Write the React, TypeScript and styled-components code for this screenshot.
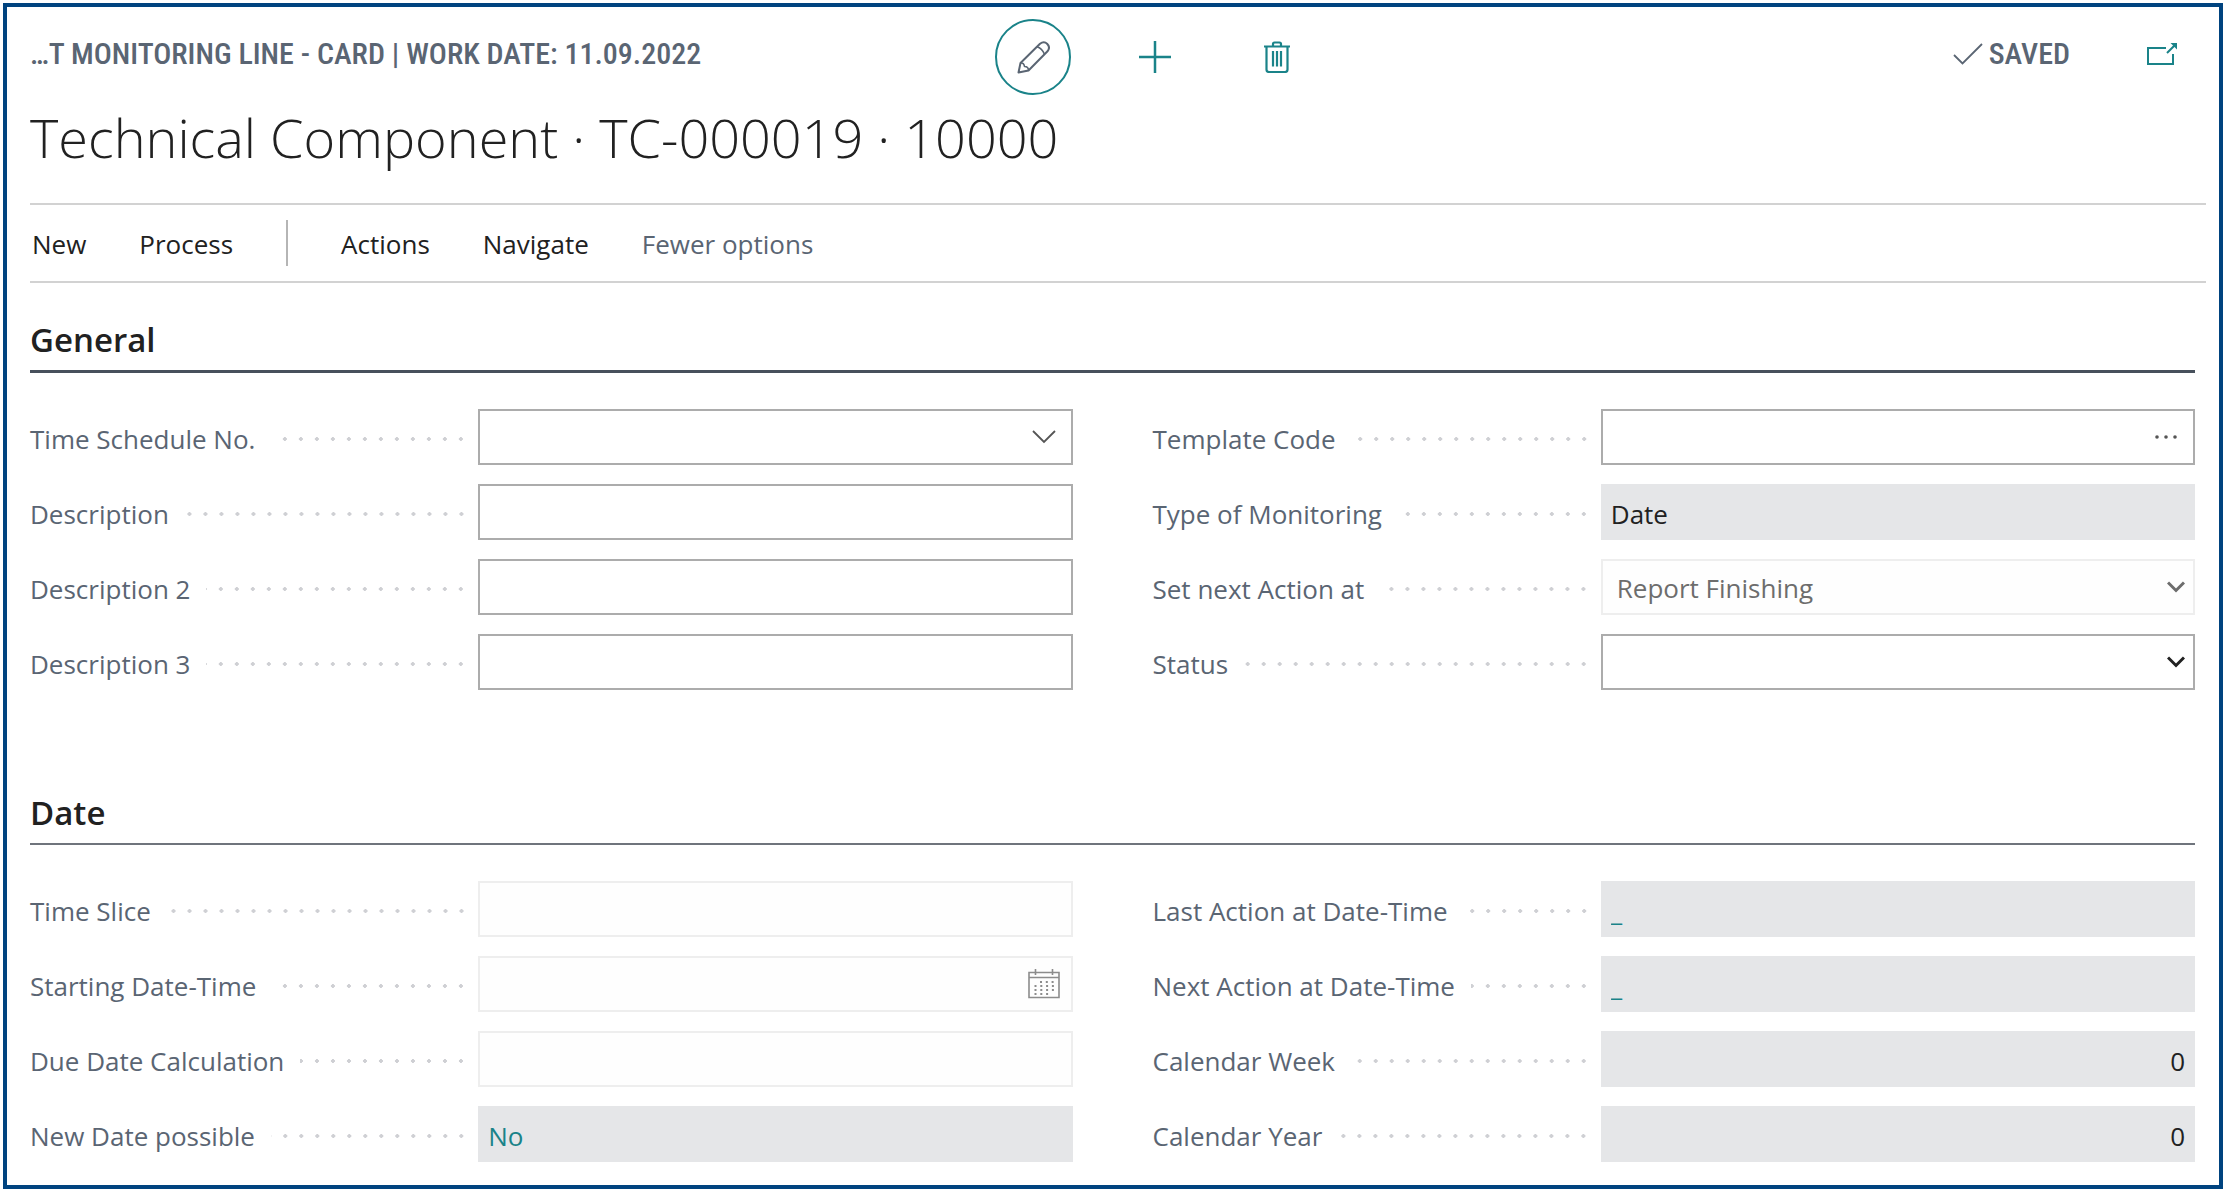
import React from 'react';
import styled, { createGlobalStyle, css } from 'styled-components';

const color = {
  frame: '#00437f',
  teal: '#1a8389',
  ink: '#212121',
  muted: '#5a6573',
  line: '#d2d2d2',
  border: '#acacac',
  borderDisabled: '#eeeeee',
  fill: '#e5e6e8',
  dot: '#cfd0d4',
};

const GlobalStyle = createGlobalStyle`
  *, *::before, *::after { box-sizing: border-box; }
  body { margin: 0; background: #fff; }
  button, input, select { font: inherit; color: inherit; }
`;

const Frame = styled.main`
  margin: 3px;
  padding: 12px 13px 23px 23px;
  border: 4px solid ${color.frame};
  background: #fff;
  color: ${color.ink};
  font: 400 26px/36px "Open Sans", "Noto Sans", sans-serif;
`;

const Header = styled.header`
  display: grid;
  grid-template-columns: 13fr auto 12fr;
  align-items: center;
  height: 76px;
`;

const Caption = styled.span`
  color: ${color.muted};
  font: 500 30px/40px "Roboto Condensed", Roboto, sans-serif;
  white-space: nowrap;
`;

const Heading = styled.div`
  display: flex;
  align-items: center;
  padding-bottom: 6px;
`;

const Tools = styled.div`
  display: flex;
  align-items: center;
  gap: 46px;
`;

const IconButton = styled.button<{ $ring?: boolean }>`
  display: grid;
  place-items: center;
  width: 76px;
  height: 76px;
  padding: 0;
  border: ${p => (p.$ring ? `2px solid ${color.teal}` : '0')};
  border-radius: 50%;
  background: none;
  color: ${p => (p.$ring ? color.muted : color.teal)};
`;

const Status = styled(Heading)`
  justify-content: flex-end;
  gap: 6px;
  color: ${color.muted};
`;

const PopOut = styled.button`
  display: grid;
  place-items: center;
  width: 56px;
  height: 56px;
  margin: 0 16px 0 58px;
  padding: 0;
  border: 0;
  background: none;
  color: ${color.teal};
`;

const Title = styled.h1`
  margin: 5px 0 29px;
  font-size: 54px;
  line-height: 74px;
  font-weight: 300;
`;

const Menu = styled.nav`
  display: flex;
  align-items: center;
  gap: 53px;
  height: 80px;
  padding-left: 2px;
  border-top: 2px solid ${color.line};
  border-bottom: 2px solid ${color.line};
`;

const MenuItem = styled.button<{ $soft?: boolean }>`
  padding: 2px 0 0;
  border: 0;
  background: none;
  color: ${p => (p.$soft ? color.muted : color.ink)};
`;

const Divider = styled.span`
  width: 2px;
  height: 46px;
  background: #b5b5b5;
`;

const Body = styled.div`
  padding-top: 34px;
`;

const Section = styled.section`
  margin-right: 11px;
  & + & { margin-top: 100px; }
`;

const SectionTitle = styled.h2<{ $active?: boolean }>`
  margin: 0 0 36px;
  padding-bottom: 7px;
  border-bottom: ${p => (p.$active ? '3px solid #47505c' : '2px solid #6f747c')};
  font-size: 33px;
  line-height: 46px;
  font-weight: 600;
`;

const Columns = styled.div`
  display: grid;
  grid-template-columns: 1fr 1fr;
  column-gap: 80px;
`;

const Column = styled.div`
  display: grid;
  align-content: start;
  row-gap: 19px;
`;

const Row = styled.div`
  display: grid;
  grid-template-columns: 43% 1fr;
  height: 56px;
`;

const Label = styled.label`
  display: flex;
  align-items: center;
  gap: 16px;
  padding: 4px 9px 0 0;
  color: ${color.muted};
  white-space: nowrap;
  &::after {
    content: '';
    flex: 1;
    height: 4px;
    background: radial-gradient(circle, ${color.dot} 0 1px, ${color.dot} 2px, transparent 2px) right center / 16px 4px repeat-x;
  }
`;

type Kind = 'edit' | 'disabled' | 'readonly';

const look = {
  edit: css`border: 2px solid ${color.border}; background: #fff;`,
  disabled: css`border: 2px solid ${color.borderDisabled}; background: #fefefe;`,
  readonly: css`border: 0; background: ${color.fill};`,
};

const Box = styled.div<{ $kind: Kind }>`
  display: flex;
  align-items: center;
  min-width: 0;
  ${p => look[p.$kind]}
`;

const TextInput = styled.input<{ $teal?: boolean; $end?: boolean }>`
  flex: 1;
  min-width: 0;
  align-self: stretch;
  padding: 4px 10px 0;
  border: 0;
  outline: 0;
  background: none;
  color: ${p => (p.$teal ? color.teal : color.ink)};
  text-align: ${p => (p.$end ? 'right' : 'left')};
`;

const Assist = styled.button`
  display: grid;
  place-items: center;
  width: 54px;
  align-self: stretch;
  padding: 0;
  border: 0;
  background: none;
  color: #555;
`;

const SelectBox = styled(Box)`
  display: grid;
  grid-template-columns: 1fr 34px;
  color: ${p => (p.$kind === 'disabled' ? '#6d6d6d' : color.ink)};
  > * { grid-row: 1; }
  > svg { grid-column: 2; justify-self: center; pointer-events: none; }
`;

const Select = styled.select`
  grid-column: 1 / -1;
  align-self: stretch;
  appearance: none;
  padding: 2px 14px 0;
  border: 0;
  outline: 0;
  background: none;
  opacity: 1;
`;

const Pencil = () => (
  <svg width="33" height="33" viewBox="0 0 33 33" fill="none" stroke="currentColor" strokeWidth="2" strokeLinejoin="round">
    <path d="M1.500 31.500 3.500 22 23 2.800q4-3.200 7.300.200t.200 7.300L11.500 29.500Z" />
    <path d="M3.500 22q3.500-.500 4 3.500 4 0 4 4M20 5.800q5 1.500 7.500 7.500" strokeWidth="1.600" />
  </svg>
);

const Plus = () => (
  <svg width="32" height="32" viewBox="0 0 32 32" fill="none" stroke="currentColor" strokeWidth="2.500">
    <path d="M16 0v32M0 16h32" />
  </svg>
);

const Trash = () => (
  <svg width="26" height="32" viewBox="0 0 26 32" fill="none" stroke="currentColor" strokeWidth="2.200">
    <path d="M0 5.500h26M9 5V3q0-1.500 1.500-1.500h5Q17 1.500 17 3v2" />
    <path d="M2.500 6v22.500q0 2.500 2.500 2.500h16q2.500 0 2.500-2.500V6" />
    <path d="M9 10v15.500M13 10v15.500M17 10v15.500" strokeWidth="2.200" />
  </svg>
);

const Check = () => (
  <svg width="30" height="24" viewBox="0 0 30 24" fill="none" stroke="currentColor" strokeWidth="1.800">
    <path d="m1 13 8.500 8.500L29 2" />
  </svg>
);

const PopOutIcon = () => (
  <svg width="32" height="24" viewBox="0 0 32 24" fill="none" stroke="currentColor" strokeWidth="2">
    <path d="M20 6H2v16h25V12M21 11l8-8" />
    <path d="M24.500 1H31v6.500Z" fill="currentColor" stroke="none" />
  </svg>
);

const ThinChevron = () => (
  <svg width="24" height="14" viewBox="0 0 24 14" fill="none" stroke="currentColor" strokeWidth="1.800">
    <path d="m1 1 11 11L23 1" />
  </svg>
);

const BoldChevron = () => (
  <svg width="18" height="12" viewBox="0 0 18 12" fill="none" stroke="currentColor" strokeWidth="3">
    <path d="m1 1.500 8 8 8-8" />
  </svg>
);

const Ellipsis = () => (
  <svg width="24" height="4" viewBox="0 0 24 4" fill="currentColor">
    <circle cx="3" cy="2" r="1.800" />
    <circle cx="12" cy="2" r="1.800" />
    <circle cx="21" cy="2" r="1.800" />
  </svg>
);

const Calendar = () => (
  <svg width="32" height="30" viewBox="0 0 32 30" fill="none" stroke="#8c8c8c" strokeWidth="1.600">
    <path d="M1 3.500h30v25H1ZM1 8.500h30M7.500 0v6M24.500 0v6" />
    <path d="M12 13h14M6.500 17h19.500M6.500 21h19.500M6.500 25h14" strokeWidth="2" strokeDasharray="2 3.800" />
  </svg>
);

type FieldDef = {
  label: string;
  kind: Kind;
  value?: string;
  teal?: boolean;
  end?: boolean;
  select?: boolean;
  assist?: { name: string; icon: React.ReactNode };
};

const general: FieldDef[][] = [
  [
    { label: 'Time Schedule No.', kind: 'edit', assist: { name: 'Choose a value', icon: <ThinChevron /> } },
    { label: 'Description', kind: 'edit' },
    { label: 'Description 2', kind: 'edit' },
    { label: 'Description 3', kind: 'edit' },
  ],
  [
    { label: 'Template Code', kind: 'edit', assist: { name: 'Look up value', icon: <Ellipsis /> } },
    { label: 'Type of Monitoring', kind: 'readonly', value: 'Date' },
    { label: 'Set next Action at', kind: 'disabled', value: 'Report Finishing', select: true },
    { label: 'Status', kind: 'edit', value: '', select: true },
  ],
];

const date: FieldDef[][] = [
  [
    { label: 'Time Slice', kind: 'disabled' },
    { label: 'Starting Date-Time', kind: 'disabled', assist: { name: 'Pick a date', icon: <Calendar /> } },
    { label: 'Due Date Calculation', kind: 'disabled' },
    { label: 'New Date possible', kind: 'readonly', value: 'No', teal: true },
  ],
  [
    { label: 'Last Action at Date-Time', kind: 'readonly', value: '_', teal: true },
    { label: 'Next Action at Date-Time', kind: 'readonly', value: '_', teal: true },
    { label: 'Calendar Week', kind: 'readonly', value: '0', end: true },
    { label: 'Calendar Year', kind: 'readonly', value: '0', end: true },
  ],
];

function Field({ def }: { def: FieldDef }) {
  const id = def.label.toLowerCase().replace(/[^a-z0-9]+/g, '-');
  const disabled = def.kind === 'disabled';
  return (
    <Row>
      <Label htmlFor={id}>{def.label}</Label>
      {def.select ? (
        <SelectBox $kind={def.kind}>
          <Select id={id} disabled={disabled} defaultValue={def.value}>
            <option>{def.value}</option>
          </Select>
          <BoldChevron />
        </SelectBox>
      ) : (
        <Box $kind={def.kind}>
          <TextInput
            id={id}
            type="text"
            defaultValue={def.value}
            disabled={disabled}
            readOnly={def.kind === 'readonly'}
            $teal={def.teal}
            $end={def.end}
          />
          {def.assist && (
            <Assist type="button" aria-label={def.assist.name} disabled={disabled}>
              {def.assist.icon}
            </Assist>
          )}
        </Box>
      )}
    </Row>
  );
}

function FastTab({ title, columns, active }: { title: string; columns: FieldDef[][]; active?: boolean }) {
  return (
    <Section>
      <SectionTitle $active={active}>{title}</SectionTitle>
      <Columns>
        {columns.map((fields, i) => (
          <Column key={i}>
            {fields.map(f => <Field key={f.label} def={f} />)}
          </Column>
        ))}
      </Columns>
    </Section>
  );
}

export default function App() {
  return (
    <>
      <GlobalStyle />
      <Frame>
        <Header>
          <Heading>
            <Caption>…T MONITORING LINE - CARD | WORK DATE: 11.09.2022</Caption>
          </Heading>
          <Tools>
            <IconButton type="button" aria-label="Edit" $ring><Pencil /></IconButton>
            <IconButton type="button" aria-label="New"><Plus /></IconButton>
            <IconButton type="button" aria-label="Delete"><Trash /></IconButton>
          </Tools>
          <Status>
            <Check />
            <Caption>SAVED</Caption>
            <PopOut type="button" aria-label="Open in new window"><PopOutIcon /></PopOut>
          </Status>
        </Header>
        <Title>Technical Component · TC-000019 · 10000</Title>
        <Menu>
          <MenuItem type="button">New</MenuItem>
          <MenuItem type="button">Process</MenuItem>
          <Divider />
          <MenuItem type="button">Actions</MenuItem>
          <MenuItem type="button">Navigate</MenuItem>
          <MenuItem type="button" $soft>Fewer options</MenuItem>
        </Menu>
        <Body>
          <FastTab title="General" columns={general} active />
          <FastTab title="Date" columns={date} />
        </Body>
      </Frame>
    </>
  );
}
